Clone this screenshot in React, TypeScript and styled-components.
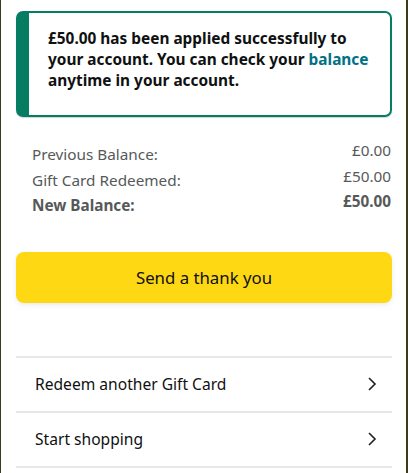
import React from 'react'
import styled, { createGlobalStyle } from 'styled-components'

const GlobalStyle = createGlobalStyle`
  html, body {
    margin: 0;
    padding: 0;
    background: #ffffff;
  }
  body {
    font-family: 'Noto Sans', 'Liberation Sans', Arial, sans-serif;
    color: #0f1111;
  }
`

const Page = styled.div`
  width: 408px;
  height: 473px;
  box-sizing: border-box;
  border-left: 1px solid #3b3a1c;
  border-right: 2px solid #3b3a1c;
  padding: 11px 14px 0 15px;
  overflow: hidden;
`

const Alert = styled.div`
  border: 2px solid #067d62;
  border-left-width: 13px;
  border-radius: 7px;
  padding: 15px 16px 24px 19px;
  box-shadow: 0 1px 1px rgba(0, 0, 0, 0.18);
`

const AlertText = styled.p`
  margin: 0;
  font-size: 15.4px;
  line-height: 21px;
  font-weight: 700;
  color: #0f1111;
`

const Link = styled.a`
  color: #007185;
  text-decoration: none;
`

const Summary = styled.div`
  display: flex;
  flex-direction: column;
  margin-top: 25px;
  padding: 0 1px 0 16px;
`

const SummaryRow = styled.div<{ $strong?: boolean }>`
  display: flex;
  justify-content: space-between;
  align-items: flex-start;
  height: 25.5px;
  font-size: 15.3px;
  color: #565959;
  font-weight: ${({ $strong }) => ($strong ? 700 : 400)};
`

const Label = styled.span`
  line-height: 25.5px;
`

const Amount = styled.span`
  line-height: 17px;
`

const PrimaryButton = styled.button`
  display: flex;
  align-items: center;
  justify-content: center;
  width: 100%;
  height: 51px;
  margin-top: 33px;
  border: 0;
  border-radius: 8px;
  background: #ffd814;
  box-shadow: 0 2px 5px rgba(213, 217, 217, 0.5);
  font-family: inherit;
  font-size: 16.8px;
  color: #0f1111;
`

const LinkList = styled.div`
  margin-top: 53px;
  border-top: 2px solid #e7e7e7;
`

const LinkRow = styled.div`
  display: flex;
  align-items: center;
  justify-content: space-between;
  height: 53px;
  padding: 0 15px 0 19px;
  border-bottom: 2px solid #e7e7e7;
  font-size: 15.6px;
  color: #0f1111;
`

const Chevron = () => (
  <svg width="10" height="16" viewBox="0 0 10 16" fill="none">
    <path d="M2 2l6 6-6 6" stroke="#1f1f1f" strokeWidth="1.6" />
  </svg>
)

const App = () => {
  return (
    <Page>
      <GlobalStyle />
      <Alert>
        <AlertText>
          £50.00 has been applied successfully to
          <br />
          your account. You can check your <Link>balance</Link>
          <br />
          anytime in your account.
        </AlertText>
      </Alert>
      <Summary>
        <SummaryRow>
          <Label>Previous Balance:</Label>
          <Amount>£0.00</Amount>
        </SummaryRow>
        <SummaryRow>
          <Label>Gift Card Redeemed:</Label>
          <Amount>£50.00</Amount>
        </SummaryRow>
        <SummaryRow $strong>
          <Label>New Balance:</Label>
          <Amount>£50.00</Amount>
        </SummaryRow>
      </Summary>
      <PrimaryButton>Send a thank you</PrimaryButton>
      <LinkList>
        <LinkRow>
          <span>Redeem another Gift Card</span>
          <Chevron />
        </LinkRow>
        <LinkRow>
          <span>Start shopping</span>
          <Chevron />
        </LinkRow>
      </LinkList>
    </Page>
  )
}

export default App
